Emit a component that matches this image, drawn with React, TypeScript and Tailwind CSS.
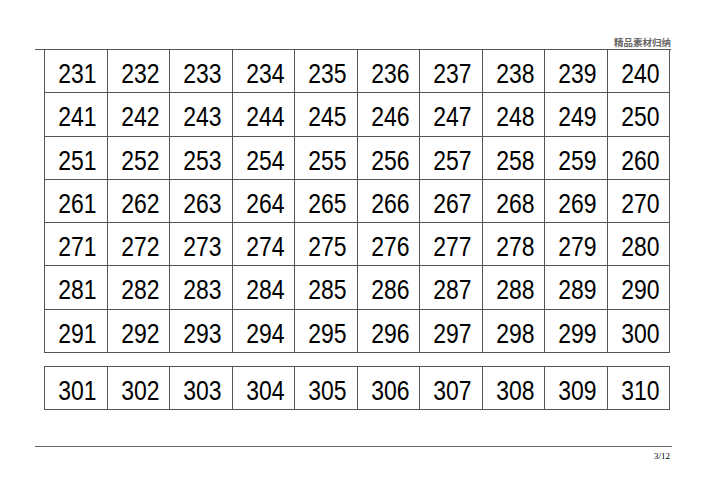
const rows = Array.from({ length: 7 }, (_, r) =>
  Array.from({ length: 10 }, (_, c) => 231 + r * 10 + c)
);
const lastRow = Array.from({ length: 10 }, (_, c) => 301 + c);

function NumberGrid({ numbers }: { numbers: number[][] }) {
  return (
    <div className="ml-[44px] grid w-[626px] grid-cols-10 border-l border-t border-[#555]">
      {numbers.flat().map((n) => (
        <div
          key={n}
          className="h-[43.3px] overflow-hidden border-b border-r border-[#555] pl-1 pt-[6px] text-center text-[28px] leading-[36px] text-black"
          style={{ fontFamily: '"Liberation Sans", Arial, sans-serif' }}
        >
          <span className="inline-block scale-x-[0.82]">{n}</span>
        </div>
      ))}
    </div>
  );
}

export default function App() {
  return (
    <div className="h-[500px] w-[707px] bg-white">
      <div className="ml-[35px] flex h-[50px] w-[636px] items-end justify-end border-b border-[#555] pb-[2px]">
        <span
          className="text-[9.5px] font-bold leading-none text-[#666]"
          style={{ fontFamily: '"Noto Sans CJK SC", sans-serif' }}
        >
          精品素材归纳
        </span>
      </div>
      <div className="-mt-px">
        <NumberGrid numbers={rows} />
      </div>
      <div className="mt-[13px]">
        <NumberGrid numbers={[lastRow]} />
      </div>
      <div className="ml-[35px] mt-[36px] w-[637px] border-t border-[#666]" />
      <div
        className="ml-[35px] mt-[5px] w-[635px] text-right text-[9px] leading-none text-black"
        style={{ fontFamily: '"Liberation Serif", serif' }}
      >
        3/12
      </div>
    </div>
  );
}
